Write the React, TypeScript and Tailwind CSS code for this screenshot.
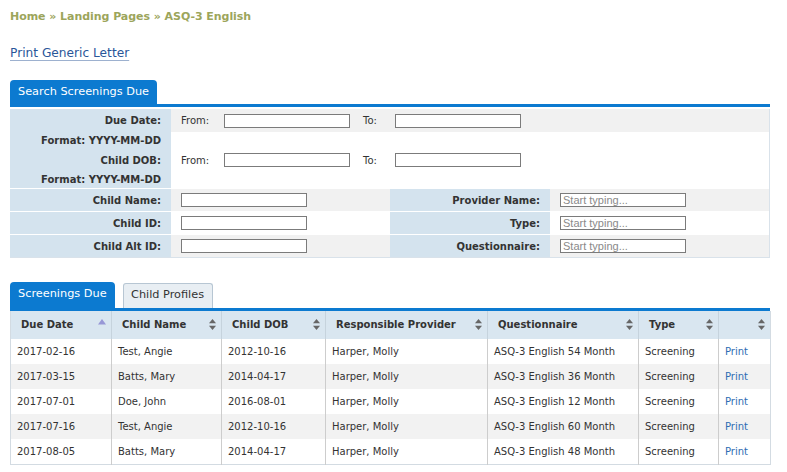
import React from "react";

const BLUE = "bg-[#0c7ad0]";

function SortBoth() {
  return (
    <svg width="7" height="11" viewBox="0 0 7 11" className="shrink-0">
      <path d="M3.5 0 L7 4.2 H0 Z" fill="#666" />
      <path d="M0 6.8 H7 L3.5 11 Z" fill="#666" />
    </svg>
  );
}

function SortUp() {
  return (
    <svg width="8" height="11" viewBox="0 0 8 11" className="shrink-0">
      <path d="M4 0 L8 5.5 H0 Z" fill="#9797d6" />
    </svg>
  );
}

function Input({ placeholder }: { placeholder?: string }) {
  return (
    <input
      readOnly
      placeholder={placeholder}
      className="w-[126px] h-[14px] border border-[#7b7b7b] bg-white px-[2px] text-[11px] font-['Liberation_Sans',sans-serif] placeholder:text-[#8a8a8a] outline-none"
    />
  );
}

const rows = [
  ["2017-02-16", "Test, Angie", "2012-10-16", "Harper, Molly", "ASQ-3 English 54 Month", "Screening"],
  ["2017-03-15", "Batts, Mary", "2014-04-17", "Harper, Molly", "ASQ-3 English 36 Month", "Screening"],
  ["2017-07-01", "Doe, John", "2016-08-01", "Harper, Molly", "ASQ-3 English 12 Month", "Screening"],
  ["2017-07-16", "Test, Angie", "2012-10-16", "Harper, Molly", "ASQ-3 English 60 Month", "Screening"],
  ["2017-08-05", "Batts, Mary", "2014-04-17", "Harper, Molly", "ASQ-3 English 48 Month", "Screening"],
];

const widths = [101, 110, 104, 162, 151, 80, 52];
const headers = ["Due Date", "Child Name", "Child DOB", "Responsible Provider", "Questionnaire", "Type", ""];

export default function App() {
  return (
    <div className="w-[787px] h-[472px] bg-white pl-[10px] text-[#333] font-['DejaVu_Sans',Tahoma,sans-serif] text-[10px] overflow-hidden">
      {/* breadcrumb */}
      <div className="h-[34px] flex items-center text-[11px] font-bold text-[#9ca55b] tracking-[-0.05px]">
        Home » Landing Pages » ASQ-3 English
      </div>
      <div className="h-[38px] flex items-center">
        <a className="text-[12.2px] text-[#2a5699] underline decoration-[#9db1cf] underline-offset-[3px] cursor-pointer">
          Print Generic Letter
        </a>
      </div>
      <div className="h-[8px]" />

      {/* search tab */}
      <div className="w-[760px]">
        <div className="flex">
          <div className={`h-[24px] w-[147px] ${BLUE} rounded-t-[4px] text-white text-[11.3px] flex items-center pl-[8px]`}>
            Search Screenings Due
          </div>
        </div>
        <div className={`h-[3px] ${BLUE}`} />
      </div>
      <div className="h-[2px]" />

      {/* search form */}
      <div className="w-[760px] border-r border-b border-[#d9e2ea]">
        <div className="flex h-[23px]">
          <div className="w-[161px] bg-[#d4e3ee] flex items-center justify-end pr-[10px] font-bold">Due Date:</div>
          <div className="flex-1 bg-[#f1f1f1] flex items-center pl-[10px]">
            <span className="w-[43px]">From:</span>
            <Input />
            <span className="ml-[13px] w-[32px]">To:</span>
            <Input />
          </div>
        </div>
        <div className="flex h-[17px]">
          <div className="w-[161px] bg-[#d4e3ee] flex items-center justify-end pr-[10px] font-bold">Format: YYYY-MM-DD</div>
          <div className="flex-1" />
        </div>
        <div className="flex h-[22px]">
          <div className="w-[161px] bg-[#d4e3ee] flex items-center justify-end pr-[10px] font-bold">Child DOB:</div>
          <div className="flex-1 flex items-center pl-[10px]">
            <span className="w-[43px]">From:</span>
            <Input />
            <span className="ml-[13px] w-[32px]">To:</span>
            <Input />
          </div>
        </div>
        <div className="flex h-[17px]">
          <div className="w-[161px] bg-[#d4e3ee] flex items-center justify-end pr-[10px] font-bold">Format: YYYY-MM-DD</div>
          <div className="flex-1" />
        </div>
        {[
          ["Child Name:", "Provider Name:", true],
          ["Child ID:", "Type:", false],
          ["Child Alt ID:", "Questionnaire:", true],
        ].map(([l1, l2, grey]) => (
          <div key={l1 as string} className={`flex h-[23px] border-t border-white ${grey ? "bg-[#f1f1f1]" : "bg-white"}`}>
            <div className="w-[161px] bg-[#d4e3ee] flex items-center justify-end pr-[10px] font-bold">{l1}</div>
            <div className="w-[219px] flex items-center pl-[10px]">
              <Input />
            </div>
            <div className="w-[160px] bg-[#d4e3ee] flex items-center justify-end pr-[10px] font-bold">{l2}</div>
            <div className="flex-1 flex items-center pl-[10px]">
              <Input placeholder="Start typing..." />
            </div>
          </div>
        ))}
      </div>

      <div className="h-[24px]" />

      {/* result tabs */}
      <div className="w-[760px]">
        <div className="flex items-end gap-[8px]">
          <div className={`h-[26px] w-[105px] ${BLUE} rounded-t-[4px] text-white text-[11.3px] flex items-center pl-[8px] pb-[1px]`}>
            Screenings Due
          </div>
          <div className="h-[25px] w-[90px] bg-[#e8eef3] border border-b-0 border-[#b7c6d3] rounded-t-[3px] text-[#333] text-[11.3px] flex items-center pl-[7px] pb-[1px]">
            Child Profiles
          </div>
        </div>
        <div className={`h-[3px] ${BLUE}`} />
      </div>

      <table className="w-[760px] table-fixed border-collapse border border-t-0 border-[#d3dbe2]">
        <colgroup>
          {widths.map((w, i) => (
            <col key={i} style={{ width: w }} />
          ))}
        </colgroup>
        <thead>
          <tr className="h-[28px] bg-[#d9e6f0]">
            {headers.map((h, i) => (
              <th key={i} className="border-l border-[#c6d3dd] first:border-l-0 p-0 pb-[2px] font-bold text-left">
                <div className="flex items-center justify-between pl-[10px] pr-[5px]">
                  <span>{h}</span>
                  {i === 0 ? <SortUp /> : <SortBoth />}
                </div>
              </th>
            ))}
          </tr>
        </thead>
        <tbody>
          {rows.map((r, ri) => (
            <tr key={ri} className={`h-[25px] ${ri % 2 === 1 ? "bg-[#f2f2f2]" : "bg-white"}`}>
              {r.map((c, ci) => (
                <td key={ci} className="border-l border-[#cdcdcd] first:border-l-0 pl-[6px] p-0 whitespace-nowrap">
                  {c}
                </td>
              ))}
              <td className="border-l border-[#cdcdcd] pl-[6px] text-[#2d6cb3]">Print</td>
            </tr>
          ))}
        </tbody>
      </table>
    </div>
  );
}
